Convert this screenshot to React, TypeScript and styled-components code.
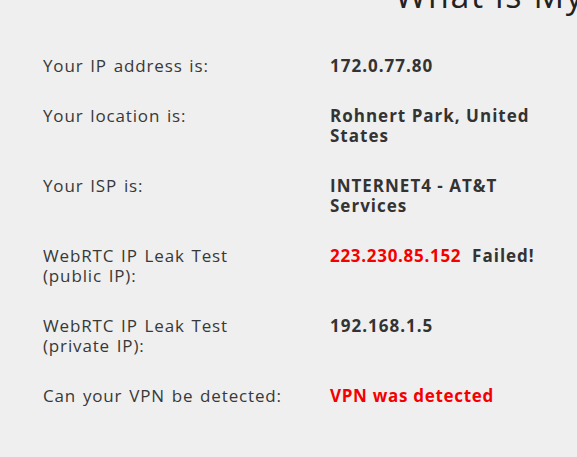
import React from 'react';
import styled, { createGlobalStyle } from 'styled-components';

const GlobalStyle = createGlobalStyle`
  html, body {
    margin: 0;
    padding: 0;
    background: #efefef;
    overflow: hidden;
  }
  body {
    font-family: "Open Sans", "Liberation Sans", sans-serif;
    color: #333;
  }
`;

const Page = styled.div`
  width: 577px;
  height: 457px;
  overflow: hidden;
`;

const Title = styled.h1`
  margin: -27px 0 0 395px;
  font-size: 34px;
  font-weight: 400;
  line-height: 44px;
  letter-spacing: 1.6px;
  color: #222;
  white-space: nowrap;
`;

const Table = styled.div`
  display: flex;
  flex-direction: column;
  gap: 30px;
  padding: 39px 0 0 43px;
`;

const Row = styled.div`
  display: grid;
  grid-template-columns: 245px 222px;
  column-gap: 42px;
  font-size: 17px;
  line-height: 20px;
`;

const Label = styled.div`
  color: #383838;
  letter-spacing: 0.85px;
  word-spacing: 1.5px;
`;

const Value = styled.div`
  font-weight: 700;
  color: #333;
  letter-spacing: 1px;
`;

const Red = styled.span`
  color: #f40000;
  letter-spacing: 0.7px;
`;

type RowType = {
  label: string;
  value: React.ReactNode;
};

export default function App() {
  const rows: RowType[] = [
    { label: 'Your IP address is:', value: '172.0.77.80' },
    { label: 'Your location is:', value: 'Rohnert Park, United States' },
    { label: 'Your ISP is:', value: 'INTERNET4 - AT&T Services' },
    {
      label: 'WebRTC IP Leak Test (public IP):',
      value: (
        <>
          <Red>223.230.85.152</Red>&nbsp; Failed!
        </>
      ),
    },
    { label: 'WebRTC IP Leak Test (private IP):', value: '192.168.1.5' },
    { label: 'Can your VPN be detected:', value: <Red>VPN was detected</Red> },
  ];

  return (
    <>
      <GlobalStyle />
      <Page>
        <Title>What is My IP Address?</Title>
        <Table>
          {rows.map((r) => (
            <Row key={r.label}>
              <Label>{r.label}</Label>
              <Value>{r.value}</Value>
            </Row>
          ))}
        </Table>
      </Page>
    </>
  );
}
